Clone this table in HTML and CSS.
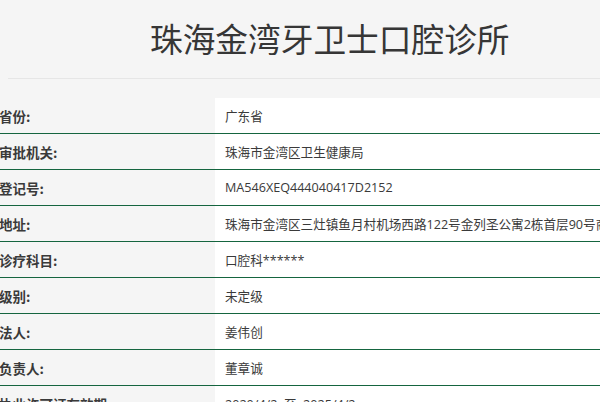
FILE: index.html
```html
<!DOCTYPE html>
<html lang="zh-CN">
<head>
<meta charset="utf-8">
<title>珠海金湾牙卫士口腔诊所</title>
<link rel="stylesheet" href="styles.css">
</head>
<body>
<div class="page">
  <header class="head">
    <h1 class="title">珠海金湾牙卫士口腔诊所</h1>
  </header>
  <div class="info">
    <div class="row"><div class="label">省份:</div><div class="value">广东省</div></div>
    <div class="row"><div class="label">审批机关:</div><div class="value">珠海市金湾区卫生健康局</div></div>
    <div class="row"><div class="label">登记号:</div><div class="value">MA546XEQ444040417D2152</div></div>
    <div class="row"><div class="label">地址:</div><div class="value">珠海市金湾区三灶镇鱼月村机场西路122号金列圣公寓2栋首层90号商铺</div></div>
    <div class="row"><div class="label">诊疗科目:</div><div class="value">口腔科******</div></div>
    <div class="row"><div class="label">级别:</div><div class="value">未定级</div></div>
    <div class="row"><div class="label">法人:</div><div class="value">姜伟创</div></div>
    <div class="row"><div class="label">负责人:</div><div class="value">董章诚</div></div>
    <div class="row"><div class="label">执业许可证有效期:</div><div class="value">2020/4/2&nbsp; 至&nbsp; 2025/4/2</div></div>
  </div>
</div>
</body>
</html>
```

FILE: styles.css
```css
html, body {
  margin: 0;
  padding: 0;
}
body {
  background: #f5f5f5;
  font-family: "Open Sans", "Noto Sans CJK SC", sans-serif;
  color: #333;
  overflow: hidden;
  width: 600px;
  height: 402px;
}
.page {
  width: 600px;
}
.head {
  margin-left: 8px;
  height: 78px;
  border-bottom: 1px solid #e6e6e6;
  display: flex;
  align-items: center;
}
.title {
  margin: 0 0 0 142px;
  font-family: "Noto Sans CJK SC", sans-serif;
  font-weight: 400;
  font-size: 32.7px;
  line-height: 1;
  color: #363636;
  white-space: nowrap;
  position: relative;
  top: -1px;
}
.info {
  margin-top: 19px;
}
.row {
  display: flex;
  height: 35px;
  border-bottom: 1px solid #15653f;
}
.label {
  width: 216px;
  flex: none;
  display: flex;
  align-items: center;
  font-family: "Noto Sans CJK SC", sans-serif;
  font-weight: 700;
  font-size: 13.5px;
  color: #3a3a3a;
  margin-left: -1px;
  white-space: nowrap;
}
.value {
  flex: 1;
  background: #fff;
  display: flex;
  align-items: center;
  padding-left: 10px;
  font-size: 12.6px;
  color: #3a3a3a;
  white-space: nowrap;
  overflow: hidden;
}
```
